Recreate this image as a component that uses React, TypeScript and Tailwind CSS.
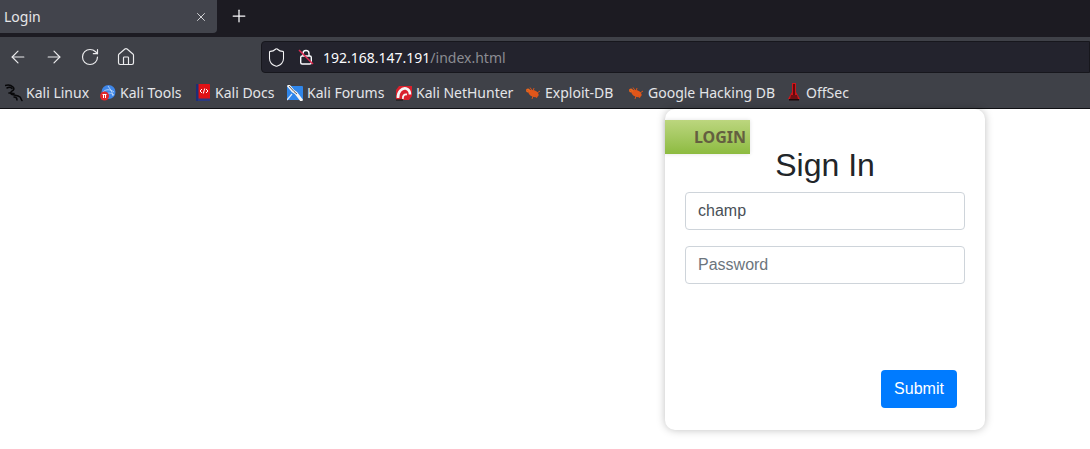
import React from 'react';
import { X, Plus, ArrowLeft, ArrowRight, RotateCw, Home, Shield } from 'lucide-react';

const ui = "font-['Noto_Sans','Open_Sans',sans-serif]";

const KaliIcon = () => (
  <svg width="18" height="18" viewBox="0 0 18 18" fill="none" stroke="#08080a" strokeWidth="1.500" strokeLinecap="round" strokeLinejoin="round">
    <path d="M0 1.500c3-1 6-.5 8 1.500 1.500 1.500 1 3-1 4-1.500 1-2 2.500 0 3.500 3 1 6 .5 8 2.500 1 1 1 2.500 2 3.500" />
    <path d="M2 4c2-1 4-.5 5 .5M4 9c2-.5 3 .5 5 .5M9 13c2 0 3 1 3 3" />
  </svg>
);

const ToolsIcon = () => (
  <svg width="16" height="16" viewBox="0 0 16 16">
    <circle cx="8.500" cy="7" r="7" fill="#3f86e8" />
    <path d="M3 7c3-3 7-3 11 0M5 10c3-3 6-2 9 0M8 1c2 3 4 5 5 10" stroke="#c9e0fb" strokeWidth="0.8" fill="none" />
    <circle cx="4.500" cy="11" r="4.500" fill="#e0262c" />
    <rect x="2.500" y="9" width="4" height="1" fill="#fff" />
    <rect x="3" y="10" width="1" height="3" fill="#fff" />
    <rect x="5" y="10" width="1" height="3" fill="#fff" />
  </svg>
);

const DocsIcon = () => (
  <svg width="16" height="17" viewBox="0 0 16 17">
    <rect x="0" y="0" width="14" height="17" rx="1" fill="#e01216" />
    <rect x="0" y="0" width="2.500" height="17" fill="#1d2f77" />
    <rect x="2" y="14.500" width="12" height="2.500" fill="#2a3a80" />
    <path d="M6 5 4 7l2 2M10 5l2 2-2 2M8.700 4.500 7.300 9.500" stroke="#fff" strokeWidth="1" fill="none" />
  </svg>
);

const ForumsIcon = () => (
  <svg width="16" height="16" viewBox="0 0 16 16">
    <rect x="0" y="1" width="16" height="14" rx="1" fill="#2f86ea" />
    <path d="M1 0 6 6 9 8 15 16" stroke="#f4f4f4" strokeWidth="3" fill="none" />
    <path d="M2 1 7 6.500 10 9" stroke="#333" strokeWidth="0.8" fill="none" />
    <path d="M0 15 5 9" stroke="#dbe9fb" strokeWidth="1.200" fill="none" />
  </svg>
);

const HunterIcon = () => (
  <svg width="16" height="16" viewBox="0 0 16 16">
    <path d="M3 1h13v10l-3 4H0V5z" fill="#d9202c" />
    <path d="M2 13C1.500 7 6 2.500 10 3.500c3 1 4 3 4 6" stroke="#f5f5f5" strokeWidth="2.600" fill="none" />
    <path d="M7 14c-.5-3 1-5 4-4.500" stroke="#f5f5f5" strokeWidth="1.800" fill="none" />
    <path d="M0 15h7" stroke="#222" strokeWidth="1.500" />
  </svg>
);

const BugIcon = () => (
  <svg width="16" height="16" viewBox="0 0 16 16">
    <ellipse cx="8.500" cy="8.500" rx="5.500" ry="3.300" transform="rotate(25 8.500 8.500)" fill="#e0561a" />
    <circle cx="3" cy="5.500" r="2" fill="#e96a1e" />
    <path d="M1 4.500 4 6.500M5 2.500l2 3M9 3 8 6.500M12 13l-2-3M7 14l1-3M15 6l-3 2" stroke="#d9531a" strokeWidth="1" />
  </svg>
);

const OffSecIcon = () => (
  <svg width="16" height="19" viewBox="0 0 16 19">
    <path d="M6 0h4v9l4 7H2l4-7z" fill="#d0141a" />
    <path d="M8 1v11" stroke="#5c0709" strokeWidth="1.800" />
    <path d="M5 12h6l1 4H4z" fill="#701013" />
    <path d="M3 16h10v1.500H3z" fill="#1f0708" />
  </svg>
);

const InsecureLock = () => (
  <svg width="16" height="16" viewBox="0 0 16 16" fill="none">
    <path d="M5 7V4.500a3 3 0 0 1 6 0V7" stroke="#fbfbfe" strokeWidth="1.400" />
    <rect x="2.700" y="7" width="10.600" height="8" rx="1.500" stroke="#fbfbfe" strokeWidth="1.400" />
    <path d="M1 1l14 14" stroke="#e22850" strokeWidth="1.500" />
  </svg>
);

const bookmarks = [
  { label: 'Kali Linux', icon: <KaliIcon />, gap: 'gap-[3px]', width: 'w-[62px]' },
  { label: 'Kali Tools', icon: <ToolsIcon />, gap: 'gap-[4px]', width: 'w-[64px]' },
  { label: 'Kali Docs', icon: <DocsIcon />, gap: 'gap-[3px]', width: 'w-[60px]' },
  { label: 'Kali Forums', icon: <ForumsIcon />, gap: 'gap-[4px]', width: 'w-[77px]' },
  { label: 'Kali NetHunter', icon: <HunterIcon />, gap: 'gap-[4px]', width: 'w-[97px]' },
  { label: 'Exploit-DB', icon: <BugIcon />, gap: 'gap-[4px]', width: 'w-[71px]' },
  { label: 'Google Hacking DB', icon: <BugIcon />, gap: 'gap-[4px]', width: 'w-[126px]' },
  { label: 'OffSec', icon: <OffSecIcon />, gap: 'gap-[4px]', width: 'w-[44px]' },
];

export default function App() {
  return (
    <div className="w-[1090px] h-[449px] overflow-hidden bg-white flex flex-col">
      {/* tab strip */}
      <div className={`${ui} h-[37px] shrink-0 bg-[#1c1b22] flex items-start`}>
        <div className="w-[217px] h-[33px] bg-[#42444c] rounded-br-[4px] flex items-center justify-between pl-[4px] pr-[9px] text-[#e6e6e8] text-[14px]">
          <span>Login</span>
          <X size={14} strokeWidth={1.6} className="text-[#dcdcdf]" />
        </div>
        <div className="w-[44px] h-[31px] flex items-center justify-center text-[#fbfbfe]">
          <Plus size={20} strokeWidth={1.5} />
        </div>
      </div>

      {/* nav bar */}
      <div className="h-[40px] shrink-0 bg-[#3f4148] flex items-center pl-[8px]">
        <div className="flex items-center gap-[16px] text-[#ececee] w-[253px]">
          <ArrowLeft size={20} strokeWidth={1.4} />
          <ArrowRight size={20} strokeWidth={1.4} />
          <RotateCw size={20} strokeWidth={1.4} />
          <Home size={20} strokeWidth={1.4} />
        </div>
        <div className={`${ui} h-[32px] flex-1 bg-[#23232d] border border-[#17171d] rounded-l-[4px] flex items-center pl-[4px] text-[14px]`}>
          <Shield size={21} strokeWidth={1.2} className="text-[#f4f4f6]" />
          <span className="ml-[11px]"><InsecureLock /></span>
          <span className="ml-[9px] text-[#fbfbfe]">192.168.147.191</span>
          <span className="text-[#8b8c92]">/index.html</span>
        </div>
      </div>

      {/* bookmarks */}
      <div className={`${ui} h-[32px] shrink-0 bg-[#3f4148] border-b border-[#101014] flex items-center pl-[5px] gap-[12px] text-[14px] text-[#e4e5e8]`}>
        {bookmarks.map(b => (
          <div key={b.label} className={`flex items-center ${b.gap}`}>
            {b.icon}
            <span className={`${b.width} whitespace-nowrap`}>{b.label}</span>
          </div>
        ))}
      </div>

      {/* page */}
      <div className="flex-1 pl-[665px] font-['Liberation_Sans',sans-serif]">
        <div className="relative w-[320px] h-[321px] bg-white rounded-[10px] shadow-[0_0_8px_rgba(0,0,0,0.25)] px-[20px] flex flex-col">
          <div className="absolute left-0 top-[11px] w-[85px] h-[34px] bg-gradient-to-b from-[#bcd67e] to-[#8dbb3f] shadow-[0_0_4px_rgba(0,0,0,0.12)] flex items-center justify-end pr-[4px] font-['Noto_Sans',sans-serif] font-bold text-[16px] text-[#645f40]">
            LOGIN
          </div>
          <h3 className="text-[32px] leading-[38px] text-[#212529] text-center mt-[37px] mb-[8px] font-normal">Sign In</h3>
          <input
            readOnly
            value="champ"
            className="w-full h-[38px] px-[12px] text-[16px] text-[#495057] border border-[#ced4da] rounded-[4px] outline-none"
          />
          <input
            readOnly
            placeholder="Password"
            className="mt-[16px] w-full h-[38px] px-[12px] text-[16px] text-[#495057] placeholder:text-[#6c757d] border border-[#ced4da] rounded-[4px] outline-none"
          />
          <div className="flex justify-end mt-[86px] pr-[8px]">
            <button className="w-[76px] h-[38px] bg-[#007bff] text-white text-[16px] rounded-[4px]">Submit</button>
          </div>
        </div>
      </div>
    </div>
  );
}
